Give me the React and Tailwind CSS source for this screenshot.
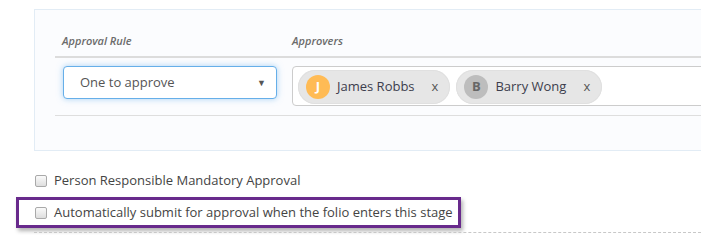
import React from "react";

const font = { fontFamily: '"Open Sans", "Liberation Sans", sans-serif' };

const Checkbox = () => (
    <span className="inline-block w-[12px] h-[12px] rounded-[2px] border border-[#a9a9a9] bg-gradient-to-b from-[#fafafa] to-[#dedede] shrink-0" />
);

const Chip = ({ initial, name, avatarClass }) => (
    <div className="flex items-center h-[34px] rounded-full bg-[#e6e6e6] pl-[8px] pr-[12px] shadow-[inset_0_0_0_1px_#e0e0e0]">
        <span className={`w-[24px] h-[24px] rounded-full flex items-center justify-center text-[13px] font-bold ${avatarClass}`}>{initial}</span>
        <span className="ml-[7px] text-[13px] text-[#3d3d4d]">{name}</span>
        <span className="ml-[17px] text-[13px] text-[#555]">x</span>
    </div>
);

const App = () => {
    return (
        <div className="w-[701px] h-[235px] bg-white overflow-hidden" style={font}>
            <div className="pt-[9px] pl-[34px]">
                <div className="w-[720px] h-[142px] border border-[#e2ecf5] bg-[#fbfcfe] pl-[20px]">
                    <div className="flex items-end h-[48px] pb-[7px] border-b-2 border-[#dcdcdc] text-[11px] italic font-semibold text-[#6b6b6b]">
                        <span className="w-[237px] pl-[7px]">Approval Rule</span>
                        <span>Approvers</span>
                    </div>
                    <div className="flex pt-[8px] pb-[9px] border-b border-[#dedede]">
                        <div className="w-[237px] pl-[8px]">
                            <div className="w-[214px] h-[33px] flex items-center justify-between pl-[16px] pr-[10px] rounded-[4px] border border-[#66afe9] bg-white shadow-[0_0_6px_rgba(102,175,233,0.55)]">
                                <span className="text-[13px] text-[#555]">One to approve</span>
                                <span className="text-[9px] text-[#555]">▼</span>
                            </div>
                        </div>
                        <div className="flex-1 h-[40px] flex items-start gap-[6px] pl-[5px] pt-[3px] rounded-[4px] border border-[#cccccc] bg-white">
                            <Chip initial="J" name="James Robbs" avatarClass="bg-[#ffbb55] text-white" />
                            <Chip initial="B" name="Barry Wong" avatarClass="bg-[#bdbdbd] text-[#666]" />
                        </div>
                    </div>
                </div>
            </div>

            <div className="flex items-center gap-[7px] pl-[35px] mt-[23px] h-[14px] text-[13px] text-[#444]">
                <Checkbox />
                <span>Person Responsible Mandatory Approval</span>
            </div>

            <div className="mt-[9px] ml-[16px] w-[445px] h-[31px] border-[3px] border-[#682a8c] shadow-[2px_3px_4px_rgba(0,0,0,0.3)] flex items-center gap-[7px] pl-[16px] text-[13px] text-[#444]">
                <Checkbox />
                <span>Automatically submit for approval when the folio enters this stage</span>
            </div>

            <div className="mt-[4px] ml-[34px] border-t border-dashed border-[#c8c8c8]" />
        </div>
    );
};

export default App;
